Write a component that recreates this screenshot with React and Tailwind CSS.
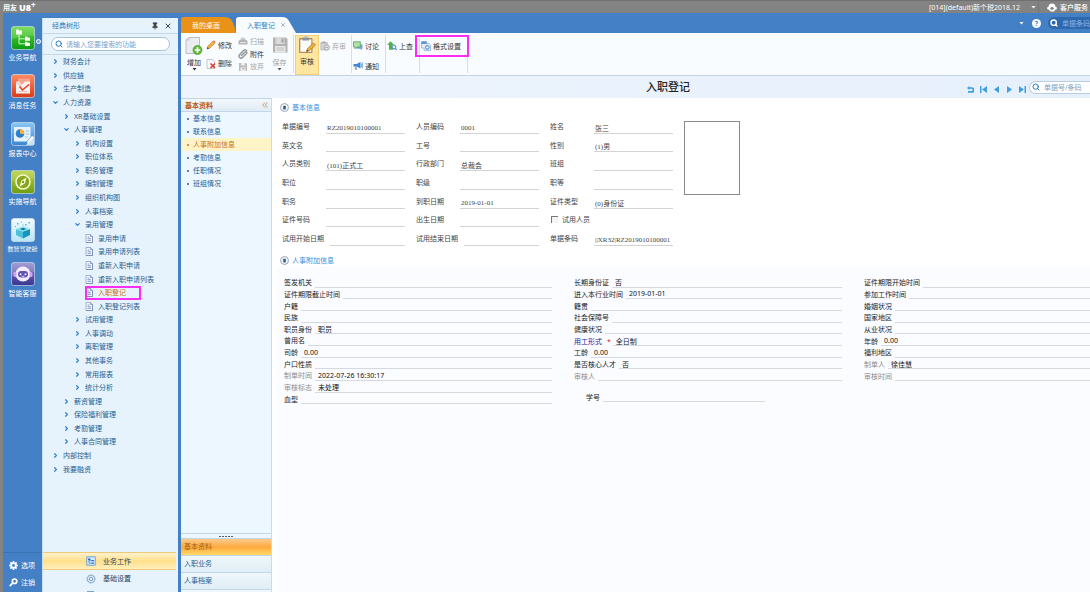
import { useState } from "react";
import { ChevronRight, ChevronDown, Search, Pin, X } from "lucide-react";

const NavTile = ({ id, from, to, children }) => (
    <svg viewBox="0 0 24 24" className="w-6 h-6 shrink-0" aria-hidden="true">
        <defs>
            <linearGradient id={id} x1="0" y1="0" x2="0" y2="1">
                <stop offset="0" stopColor={from} />
                <stop offset="1" stopColor={to} />
            </linearGradient>
        </defs>
        <rect x="0.5" y="0.5" width="23" height="23" rx="2.5" fill={`url(#${id})`} stroke="#dcebf5" strokeOpacity="0.75" strokeWidth="0.8" />
        {children}
    </svg>
);

const navItems = [
    {
        label: "业务导航",
        icon: (
            <NavTile id="n1" from="#5fd836" to="#0c9a14">
                <path d="M1 1h22v9Q12 9 1 13z" fill="#fff" opacity="0.18" />
                <path d="M5 3.5h2.5l.8 1H11v4H5zM14 10.5h2.2l.7.9H19v3.4h-5zM14 15.8h2.2l.7.9H19v3.4h-5z" fill="#f4fff0" />
                <path d="M8 8.5v9.3h6M8 12.8h6" stroke="#e6ffe0" fill="none" strokeWidth="0.9" />
            </NavTile>
        ),
    },
    {
        label: "消息任务",
        icon: (
            <NavTile id="n2" from="#ff8a62" to="#d93a1b">
                <rect x="7" y="4.500" width="12" height="9" fill="#f3a48e" />
                <path d="M5 7.500h3l2.500 3.500L14 7.500h5V19.500H5z" fill="#f8f1ee" />
                <path d="M5 8l5.500 4.500" stroke="#e39b88" fill="none" strokeWidth="0.8" />
                <path d="M8.500 12.500l3 3.500 6.500-5.500" stroke="#e0442a" fill="none" strokeWidth="1.600" />
                <path d="M7.500 17.500h9" stroke="#e9b5a6" fill="none" strokeWidth="0.8" />
            </NavTile>
        ),
    },
    {
        label: "报表中心",
        icon: (
            <NavTile id="n3" from="#8cc7f5" to="#3b86cf">
                <path d="M3 5h16.500v10l-4 4.500H3z" fill="#e6f3fd" />
                <circle cx="9" cy="11.500" r="4.300" fill="#2f80cf" />
                <path d="M9 11.500V7.200a4.300 4.300 0 0 1 4.200 5z" fill="#f7b733" />
                <path d="M14.500 9h3.500M15 12h3M14.500 15h2" stroke="#86b9e2" strokeWidth="0.9" />
                <path d="M23 14.500l-8 8.500h8z" fill="#c8e3f7" />
                <path d="M16 20l5-6 2 1-6 7z" fill="#fff" />
            </NavTile>
        ),
    },
    {
        label: "实施导航",
        icon: (
            <NavTile id="n4" from="#b9d13c" to="#6f9c10">
                <path d="M1 1h22v8Q12 8 1 12z" fill="#fff" opacity="0.15" />
                <circle cx="12" cy="12" r="7" fill="#87a81d" stroke="#f3fad0" strokeWidth="1.5" />
                <path d="M15.500 7.500l-1.700 6-5.300 3.200 1.800-6z" fill="#f7fce0" />
                <circle cx="12" cy="12" r="1.200" fill="#7c9d18" />
            </NavTile>
        ),
    },
    {
        label: "数智驾驶舱",
        compact: true,
        icon: (
            <NavTile id="n5" from="#f5fcff" to="#b8e4f5">
                <path d="M5 11l7 2.500v7L5 17z" fill="#49c3dc" />
                <path d="M19 11l-7 2.500v7l7-3.500z" fill="#1893bd" />
                <path d="M5 11l7-2.500 7 2.500-7 2.500z" fill="#8ce4ec" />
                <path d="M8.500 11l3.500-1.300 3.500 1.300-3.500 1.300z" fill="#1779a5" />
                <path d="M6 5h1.500v1.500H6zM10 3.500h1v1h-1zM14 6h1.500v1.500H14zM17.500 4h1.500v1.500h-1.500zM11.500 6.500h1v1h-1zM4 8h1v1H4z" fill="#45bfd8" />
            </NavTile>
        ),
    },
    {
        label: "智能客服",
        icon: (
            <NavTile id="n6" from="#8a84c9" to="#3a3390">
                <path d="M1 1h22v9Q12 8 1 14z" fill="#fff" opacity="0.2" />
                <circle cx="12" cy="12" r="7.500" fill="#f4edff" />
                <rect x="7" y="9" width="10" height="6.500" rx="3.200" fill="#6552b0" />
                <circle cx="9.500" cy="12.200" r="1" fill="#d9f2ff" />
                <circle cx="14.500" cy="12.200" r="1" fill="#d9f2ff" />
                <rect x="2.500" y="10" width="3" height="5" rx="1.300" fill="#cfa5f2" />
                <rect x="18.500" y="10" width="3" height="5" rx="1.300" fill="#cfa5f2" />
                <path d="M10.500 14q1.500 1 3 0" stroke="#fff" fill="none" strokeWidth="0.7" />
            </NavTile>
        ),
    },
];

const tree = [
    [0, "财务会计"],
    [0, "供应链"],
    [0, "生产制造"],
    [0, "人力资源", true],
    [1, "XR基础设置"],
    [1, "人事管理", true],
    [2, "机构设置"],
    [2, "职位体系"],
    [2, "职务管理"],
    [2, "编制管理"],
    [2, "组织机构图"],
    [2, "人事档案"],
    [2, "录用管理", true],
    [3, "录用申请"],
    [3, "录用申请列表"],
    [3, "重新入职申请"],
    [3, "重新入职申请列表"],
    [3, "入职登记"],
    [3, "入职登记列表"],
    [2, "试用管理"],
    [2, "人事调动"],
    [2, "离职管理"],
    [2, "其他事务"],
    [2, "常用报表"],
    [2, "统计分析"],
    [1, "薪资管理"],
    [1, "保险福利管理"],
    [1, "考勤管理"],
    [1, "人事合同管理"],
    [0, "内部控制"],
    [0, "我要融资"],
];

const indents = ["pl-[9px]", "pl-[20px]", "pl-[31px]", "pl-[42px]"];

const DocIcon = () => (
    <svg viewBox="0 0 8 9" className="w-2 h-[9px] shrink-0 mr-[5px]" aria-hidden="true">
        <path d="M1 .5h4.500l2 2v6H1z" fill="#f8fbff" stroke="#8f9fc4" strokeWidth="0.8" />
        <path d="M5.500.5v2h2v6H1" fill="none" stroke="#6f7fae" strokeWidth="0.7" />
        <path d="M2.500 3h2M2.500 4.700h3.500M2.500 6.400h3.500" stroke="#5f86c4" strokeWidth="0.8" />
    </svg>
);

const TreeRow = ({ level, label, open }) => {
    const selected = label === "入职登记";
    return (
        <li className="flex-1 min-h-0 flex">
            <button type="button" className={`relative flex items-center w-full ${indents[level]} ${selected ? "text-[#c96f14]" : "text-[#265f90]"}`}>
                {level === 3 && <DocIcon />}
                {level < 3 && !open && <ChevronRight className="w-[7px] h-[7px] mr-1 shrink-0 text-[#2b7cc9]" strokeWidth={4} />}
                {level < 3 && open && <ChevronDown className="w-[7px] h-[7px] mr-1 shrink-0 text-[#2b7cc9]" strokeWidth={4} />}
                <span>{label}</span>
                {selected && <span className="absolute left-[42px] top-0 w-14 h-[14px] border-2 border-[#fb2df0]" />}
            </button>
        </li>
    );
};

const Caret = ({ className }) => (
    <svg viewBox="0 0 5 3" className={`w-[5px] h-[3px] shrink-0 ${className}`} aria-hidden="true">
        <path d="M.5 0h4L2.500 2.500z" fill="currentColor" />
    </svg>
);

const smallIcons = {
    pencil: (
        <>
            <path d="M1 9l.8-2.800L7 1l2 2-5.200 5.200z" fill="#f3b13c" stroke="#a8701c" strokeWidth="0.5" />
            <path d="M7 1l2 2 .7-1L8 .3z" fill="#e7766a" />
            <path d="M1 9l.6-2 1.400 1.400z" fill="#333" />
        </>
    ),
    remove: (
        <>
            <path d="M1 .5h5.500l2 2v7H1z" fill="#f7f9fb" stroke="#9aa8b5" strokeWidth="0.6" />
            <path d="M4.500 4.500l4.500 4.500M9 4.500L4.500 9" stroke="#df3528" strokeWidth="1.5" />
        </>
    ),
    scan: (
        <>
            <path d="M3 1l4 1v3H3z" fill="#d0d0d0" />
            <path d="M.5 5l2-1.500h5L9.500 5v3.500h-9z" fill="#b3b3b3" />
            <path d="M2 6.500h6" stroke="#e8e8e8" />
        </>
    ),
    clip: <path d="M3 7l4-4a1 1 0 0 1 1.500 1.500L4.500 8.500a1.900 1.900 0 0 1-3-2.800l4-4.200A2.300 2.300 0 0 1 9 2" fill="none" stroke="#8f9396" strokeWidth="1.3" />,
    discard: (
        <>
            <path d="M1 1h7l1 1v7H1z" fill="#bcbcbc" />
            <path d="M3 1h4v2.500H3zM2.500 5.500h5V9h-5z" fill="#ededed" />
            <path d="M4 6.800h2.500" stroke="#999" strokeWidth="0.8" />
        </>
    ),
    unaudit: (
        <>
            <path d="M.8 1.500h6.500v7.500H.8z" fill="#d4d4d4" stroke="#aaa" strokeWidth="0.6" />
            <path d="M2.500.5h3v2h-3z" fill="#aaa" />
            <circle cx="6.800" cy="6.500" r="2.600" fill="#e4e4e4" stroke="#a4a4a4" strokeWidth="0.9" />
            <path d="M5.500 6.500h2.700" stroke="#999" strokeWidth="0.8" />
        </>
    ),
    chat: (
        <>
            <path d="M3.500 3.500h6v4.300H8.600v1.500L7 7.800H3.500z" fill="#74a8dc" />
            <path d="M.5.8h6.800v5.200H3.600L2 7.700V6H.5z" fill="#b5e0ae" stroke="#53a052" strokeWidth="0.8" />
        </>
    ),
    notice: (
        <>
            <path d="M.5 3h3l4-2v6.500l-4-2h-3z" fill="#3f87cf" />
            <path d="M1.500 5.500h2l.7 3.500H2.300z" fill="#9aa8b5" />
            <path d="M8.500 2.500v4M9.600 1.500v6" stroke="#4b91d4" strokeWidth="0.7" />
        </>
    ),
    lookup: (
        <>
            <path d="M3.500.2L7 4H5v2.200h1.500v2.500H2V4H.2z" fill="#54b04b" />
            <circle cx="7" cy="6" r="1.900" fill="#e5f2fb" stroke="#3a7fc2" strokeWidth="0.9" />
            <path d="M8.300 7.400L9.700 9" stroke="#3a7fc2" strokeWidth="1.100" />
        </>
    ),
    format: (
        <>
            <path d="M.5.5h5v2h2.500l1.500 1.500V9.500H3V7H.5z" fill="#e4effa" stroke="#85aede" strokeWidth="0.7" />
            <path d="M.5.5h5v2.500h-5z" fill="#5b96d6" />
            <circle cx="6.300" cy="6.400" r="1.900" fill="#c3d8ef" stroke="#4b80bb" strokeWidth="0.9" />
            <circle cx="6.300" cy="6.400" r=".7" fill="#fff" />
        </>
    ),
};

const ToolButton = ({ icon, label, muted, className = "h-5" }) => (
    <button type="button" className={`flex items-center gap-[2px] ${className} ${muted ? "text-[#a8a8a8]" : "text-[#333]"}`}>
        <svg viewBox="0 0 10 10" className="w-[10px] h-[10px] shrink-0" aria-hidden="true">
            {smallIcons[icon]}
        </svg>
        <span>{label}</span>
    </button>
);

const AddIcon = () => (
    <svg viewBox="0 0 18 18" className="w-[18px] h-[18px]" aria-hidden="true">
        <path d="M1 3L4 .5h10.500V16.500H1z" fill="#e9edf0" stroke="#a9b1b8" strokeWidth="0.8" />
        <path d="M1 3.500h3.500V.5z" fill="#c6ccd2" />
        <circle cx="12.500" cy="13" r="4.500" fill="#67b83b" stroke="#3f8d22" strokeWidth="0.6" />
        <path d="M12.500 10.300v5.400M9.800 13h5.400" stroke="#fff" strokeWidth="1.7" />
    </svg>
);

const SaveIcon = () => (
    <svg viewBox="0 0 18 18" className="w-[18px] h-[18px]" aria-hidden="true">
        <path d="M2 1.500h13l1.500 1.500v13.500H2z" fill="#b2b2b2" />
        <path d="M4.500 1.500h9V8h-9z" fill="#dadada" />
        <path d="M10.500 2.500h2v4h-2z" fill="#a0a0a0" />
        <path d="M4 10h10.500v6.500H4z" fill="#e6e6e6" />
        <path d="M5.500 12h7.500M5.500 14h7.500" stroke="#b8b8b8" strokeWidth="0.8" />
    </svg>
);

const AuditIcon = () => (
    <svg viewBox="0 0 18 18" className="w-[18px] h-[18px]" aria-hidden="true">
        <rect x="1" y="2" width="13.500" height="15" rx="1" fill="#b98a55" />
        <rect x="2.300" y="3.500" width="11" height="12.300" fill="#fbfbf8" />
        <path d="M4.500 1.500h6.500v3H4.500z" fill="#8b96a1" />
        <path d="M6.500 0h2.500v2H6.500z" fill="#b6bec5" />
        <path d="M8.500 15.500l1-3 6-5.500 2 2-6 5.500z" fill="#f2b036" stroke="#96641c" strokeWidth="0.6" />
        <path d="M8.500 15.500l.6-1.800 1.200 1.200z" fill="#222" />
    </svg>
);

const Toolbar = () => (
    <div className="flex h-[43px] shrink-0 bg-[#f9fcff] border-b border-[#c5d3e2] text-[#333]">
        <div className="flex my-[2px] pl-px border-r border-[#d5dfe9] w-[113px] shrink-0">
            <button type="button" className="flex flex-col items-center w-6 pt-[2px]">
                <AddIcon />
                <span className="mt-[3px]">增加</span>
                <Caret className="mt-px" />
            </button>
            <div className="flex flex-col w-8 pt-px">
                <ToolButton icon="pencil" label="修改" />
                <ToolButton icon="remove" label="删除" />
            </div>
            <div className="flex flex-col w-7">
                <ToolButton icon="scan" label="扫描" muted className="h-[13px]" />
                <ToolButton icon="clip" label="附件" className="h-[13px]" />
                <ToolButton icon="discard" label="放弃" muted className="h-[13px]" />
            </div>
            <button type="button" className="flex flex-col items-center w-[27px] pt-px text-[#a0a0a0]">
                <SaveIcon />
                <span className="mt-1">保存</span>
                <Caret className="mt-px text-[#555]" />
            </button>
        </div>
        <div className="flex my-[2px] w-[58px] shrink-0 border-r border-[#d5dfe9]">
            <button type="button" className="flex flex-col items-center w-6 ml-px mr-px h-10 shrink-0 bg-[#fde6a0] border border-[#f3cf7a]">
                <AuditIcon />
                <span className="mt-[3px]">审核</span>
            </button>
            <ToolButton icon="unaudit" label="弃审" muted className="h-[22px]" />
        </div>
        <div className="my-[2px] w-[34px] pl-px pt-px shrink-0 border-r border-[#d5dfe9]">
            <ToolButton icon="chat" label="讨论" />
            <ToolButton icon="notice" label="通知" />
        </div>
        <div className="my-[2px] w-[34px] pl-px pt-px shrink-0 border-r border-[#d5dfe9]">
            <ToolButton icon="lookup" label="上查" />
        </div>
        <div className="relative my-[2px] w-12 pl-px pt-px shrink-0 border-r border-[#d5dfe9]">
            <ToolButton icon="format" label="格式设置" />
            <span className="absolute -left-[5px] top-0 w-[54px] h-[22px] border-2 border-[#fb2df0]" />
        </div>
    </div>
);

const Tabs = () => (
    <div className="flex items-end h-5 shrink-0 bg-[#4480c6]">
        <button type="button" className="relative w-[55px] h-4 pl-[11px] text-left text-white">
            <svg viewBox="0 0 55 16" preserveAspectRatio="none" className="absolute inset-0 w-full h-full" aria-hidden="true">
                <path d="M0 16V3Q0 0 3 0H43Q49 0 51 4Q54 9 55 16z" fill="#ea9118" />
            </svg>
            <span className="relative">我的桌面</span>
        </button>
        <div className="relative w-[60px] h-4 flex items-center pl-[11px] text-[#2f7cc4]">
            <svg viewBox="0 0 60 16" preserveAspectRatio="none" className="absolute inset-0 w-full h-full" aria-hidden="true">
                <path d="M0 16V3Q0 0 3 0H46Q51 0 53 4L60 16z" fill="#f9fcff" />
            </svg>
            <button type="button" className="relative">入职登记</button>
            <button type="button" aria-label="关闭" className="relative ml-[5px]">
                <X className="w-[6px] h-[6px] text-[#8796a5]" strokeWidth={3} />
            </button>
        </div>
        <div className="ml-auto self-center flex items-center text-white">
            <Caret className="mr-[8px]" />
            <button type="button" aria-label="帮助" className="w-[9px] h-[9px] mr-[7px] rounded-full bg-white text-[#4480c6] font-bold">?</button>
            <label className="flex items-center w-[42px] h-3 pl-[2px] rounded-l-full bg-[#2f68ac]">
                <Search className="w-2 h-2 mr-1 shrink-0" strokeWidth={4} />
                <input aria-label="单据条码" placeholder="单据条码" className="w-full min-w-0 bg-transparent outline-none placeholder:text-[#86b3e4]" />
            </label>
        </div>
    </div>
);

const pagers = [
    ["刷新", "M2.500 0L0 2l2.500 2V2.800h2a1 1 0 0 1 0 2.200H1v1.800h3.800a2.700 2.700 0 0 0 0-5.500H2.500z"],
    ["首张", "M0 0h1.500v7H0zM7 0v7L2 3.500z"],
    ["上张", "M6 0v7L1 3.500z"],
    ["下张", "M1 0v7l5-3.500z"],
    ["末张", "M0 0v7l5-3.500zM5.500 0H7v7H5.500z"],
];

const TitleBar = () => (
    <div className="flex items-center h-[22px] shrink-0 bg-gradient-to-r from-[#eef4fd] to-[#e6f0fc]">
        <h1 className="ml-auto mr-[277px] text-[11px] leading-3 font-medium text-[#222]">入职登记</h1>
        <div className="flex items-center gap-[6px] mt-1 mr-[3px]">
            {pagers.map(([label, d]) => (
                <button key={label} type="button" aria-label={label}>
                    <svg viewBox="0 0 7 7" className="w-[7px] h-[7px]" aria-hidden="true">
                        <path d={d} fill="#3f9fe2" />
                    </svg>
                </button>
            ))}
        </div>
        <label className="flex items-center w-[61px] h-[13px] pl-[2px] rounded-l-full bg-white border border-r-0 border-[#b9cde2]">
            <Search className="w-2 h-2 mr-1 shrink-0 text-[#2878c0]" strokeWidth={3} />
            <input aria-label="单据号/条码" placeholder="单据号/条码" className="w-full min-w-0 outline-none placeholder:text-[#7f9fc0]" />
        </label>
    </div>
);

const sections = ["基本信息", "联系信息", "人事附加信息", "考勤信息", "任职情况", "班组情况"];
const drawers = ["基本资料", "入职业务", "人事档案"];

const SectionList = () => (
    <aside className="flex flex-col w-[91px] shrink-0 bg-[#edf7ff] border-r border-[#c9dcec] text-[#1f5c93]">
        <div className="flex items-center justify-between h-[14px] shrink-0 pl-1 pr-[3px] border-y border-[#c3d6e8] bg-gradient-to-b from-[#f3f8fc] to-[#dfebf5]">
            <span className="font-bold text-[#bb5a10]">基本资料</span>
            <svg viewBox="0 0 6 6" className="w-[6px] h-[6px]" aria-hidden="true">
                <path d="M3 .5L.8 3 3 5.500M5.500.5L3.300 3l2.200 2.500" fill="none" stroke="#c48a58" strokeWidth="0.8" />
            </svg>
        </div>
        <ul className="flex-1 min-h-0 overflow-hidden">
            {sections.map((s) => (
                <li key={s}>
                    <button type="button" className={`flex items-center w-full h-[13px] pl-[6px] ${s === "人事附加信息" ? "bg-[#fff4c8] text-[#c96f14]" : ""}`}>
                        <span className="w-[2px] h-[2px] mr-1 rounded-full bg-current" />
                        {s}
                    </button>
                </li>
            ))}
        </ul>
        <div className="flex items-center justify-center gap-px h-[5px] shrink-0 border-t border-[#c3d6e8]">
            {[0, 1, 2, 3, 4].map((i) => (
                <span key={i} className="w-[2px] h-px bg-[#55606c]" />
            ))}
        </div>
        <div className="h-[54px] shrink-0 overflow-hidden">
            {drawers.map((d, i) => (
                <button
                    key={d}
                    type="button"
                    className={`block w-full h-[17px] pl-[3px] pb-px text-left border-t border-[#c3d6e8] ${
                        i === 0 ? "bg-linear-to-b from-[#fdcb8a] via-[#fda93c] to-[#ffd968] text-[#a4600e]" : "bg-linear-to-b from-[#eff7fb] to-[#e0eef5]"
                    }`}
                >
                    {d}
                </button>
            ))}
            <div className="h-[3px] border-t border-[#c3d6e8]" />
        </div>
    </aside>
);

const basicFields = [
    ["单据编号", "RZ2019010100001"],
    ["人员编码", "0001"],
    ["姓名", "张三"],
    ["英文名", ""],
    ["工号", ""],
    ["性别", "(1)男"],
    ["人员类别", "(101)正式工"],
    ["行政部门", "总裁会"],
    ["班组", ""],
    ["职位", ""],
    ["职级", ""],
    ["职等", ""],
    ["职务", ""],
    ["到职日期", "2019-01-01"],
    ["证件类型", "(0)身份证"],
    ["证件号码", ""],
    ["出生日期", ""],
    ["试用人员", "check"],
    ["试用开始日期", ""],
    ["试用结束日期", ""],
    ["单据条码", "||XR32|RZ2019010100001"],
];

const BasicField = ({ label, value }) => {
    if (value === "check") {
        return (
            <label className="flex items-center gap-1 pl-px">
                <input type="checkbox" className="appearance-none w-[7px] h-[7px] bg-[#f4f4f4] border-t border-l border-t-[#777] border-l-[#777]" />
                {label}
            </label>
        );
    }
    return (
        <label className="flex items-center">
            <span className="min-w-11 shrink-0 pr-[6px]">{label}</span>
            <input
                defaultValue={value}
                className="w-full min-w-0 h-[11px] pl-px self-end mb-[2px] bg-transparent border-b border-[#d3d3d3] outline-none font-['Liberation_Serif','Noto_Sans_CJK_SC',serif] text-[#444]"
            />
        </label>
    );
};

const extraFields = [
    [
        ["签发机关"],
        ["证件期限截止时间"],
        ["户籍"],
        ["民族"],
        ["职员身份", "职员"],
        ["曾用名"],
        ["司龄", "0.00"],
        ["户口性质"],
        ["制单时间", "2022-07-26 16:30:17", "muted"],
        ["审核标志", "未处理", "muted"],
        ["血型"],
    ],
    [
        ["长期身份证", "否"],
        ["进入本行业时间", "2019-01-01"],
        ["籍贯"],
        ["社会保障号"],
        ["健康状况"],
        ["用工形式", "全日制", "required"],
        ["工龄", "0.00"],
        ["是否核心人才", "否"],
        ["审核人", "", "muted"],
    ],
    [
        ["证件期限开始时间"],
        ["参加工作时间"],
        ["婚姻状况"],
        ["国家地区"],
        ["从业状况"],
        ["年龄", "0.00"],
        ["福利地区"],
        ["制单人", "徐佳慧", "muted"],
        ["审核时间", "", "muted"],
    ],
];

const tones = { muted: "text-[#8c8c8c]", required: "text-[#1a1a9c]" };

const ExtraField = ({ label, value, tone }) => (
    <label className="flex items-center">
        <span className={`shrink-0 mr-[3px] ${tones[tone] || "text-[#222]"}`}>{label}</span>
        {tone === "required" && <span className="mx-[2px] text-[#f01414]">*</span>}
        <input defaultValue={value} className="w-full min-w-0 h-[10px] pl-[3px] bg-transparent border-b border-[#d5dae2] outline-none text-[#111]" />
    </label>
);

const SectionHeading = ({ children }) => (
    <h2 className="flex items-center gap-[3px] h-3 text-[#3490e0]">
        <svg viewBox="0 0 9 9" className="w-[9px] h-[9px]" aria-hidden="true">
            <circle cx="4.500" cy="4.500" r="4" fill="#eef3f8" stroke="#8b98a5" strokeWidth="0.8" />
            <path d="M3.200 2.800h2.600v3.600H3.200z" fill="#275f9f" />
        </svg>
        {children}
    </h2>
);

const Form = () => (
    <main className="flex-1 min-w-0 flex flex-col bg-white text-[#444]">
        <div className="pl-2 pt-[3px]">
            <SectionHeading>基本信息</SectionHeading>
        </div>
        <div className="flex items-start pl-[10px] pt-1">
            <div className="grid grid-cols-[123px_123px_123px] grid-rows-7 gap-x-[11px] h-[131px] shrink-0">
                {basicFields.map(([label, value]) => (
                    <BasicField key={label} label={label} value={value} />
                ))}
            </div>
            <div className="w-14 h-[74px] mt-1 ml-[11px] shrink-0 border border-[#8a8a8a]" />
        </div>
        <div className="pl-2 pt-[6px]">
            <SectionHeading>人事附加信息</SectionHeading>
        </div>
        <div className="flex-1 ml-1 pl-2 pt-[11px] bg-[#fbfcff]">
            <div className="grid grid-cols-[268fr_268fr_226fr] gap-x-[22px]">
                {extraFields.map((col, i) => (
                    <div key={i}>
                        <div className={`grid ${i === 0 ? "h-32 grid-rows-11" : "h-[105px] grid-rows-9"}`}>
                            {col.map(([label, value, tone]) => (
                                <ExtraField key={label} label={label} value={value} tone={tone} />
                            ))}
                        </div>
                        {i === 1 && (
                            <div className="w-[191px] mt-[10px] pl-3">
                                <ExtraField label="学号" />
                            </div>
                        )}
                    </div>
                ))}
            </div>
        </div>
    </main>
);

const SystemIcon = ({ gear }) => (
    <svg viewBox="0 0 10 10" className="w-[10px] h-[10px] mr-[7px]" aria-hidden="true">
        {gear ? (
            <>
                <circle cx="5" cy="5" r="3.900" fill="#d9e7f4" stroke="#5f88b3" strokeWidth="1" strokeDasharray="1.5 .5" />
                <circle cx="5" cy="5" r="1.600" fill="#fff" stroke="#5f88b3" strokeWidth="0.8" />
            </>
        ) : (
            <>
                <rect x=".8" y=".8" width="8.400" height="8.400" fill="#d7eaff" stroke="#5c93cc" strokeWidth="0.8" />
                <path d="M2 2.500h2.500v1.500H2zM5.500 4h2.500v1.300H5.500zM5.500 6.500h2.500v1.300H5.500z" fill="#2672bd" />
                <path d="M3 4v3.200h2.500M3 4.700h2.500" stroke="#2672bd" fill="none" strokeWidth="0.7" />
            </>
        )}
    </svg>
);

const App = () => {
    const [keyword, setKeyword] = useState("");

    return (
        <div className="flex flex-col h-screen overflow-hidden bg-[#838383] text-[7px] leading-[9px] font-['Noto_Sans','Noto_Sans_CJK_SC',sans-serif]">
            <header className="flex items-center h-[13px] shrink-0 pl-[3px] pt-px border-t border-[#707070] text-white">
                <span className="font-bold">用友</span>
                <span className="ml-[2px] text-[9px] font-black">U8</span>
                <span className="text-[8px] leading-[5px] self-start font-bold">+</span>
                <span className="ml-auto">[014](default)新个税2018.12</span>
                <Caret className="ml-[11px] mr-[2px]" />
                <span className="w-px h-3 bg-[#757575]" />
                <button type="button" className="flex items-center ml-[8px] gap-[3px] font-medium">
                    <svg viewBox="0 0 10 9" className="w-[10px] h-[9px]" aria-hidden="true">
                        <path d="M1.500 4a3.500 3.500 0 0 1 7 0l1.300.2v2L8.500 6.500 7 8.500H4L1.500 6.500.2 6V4.200z" fill="#fff" />
                        <path d="M3 5.200Q5 3 7 5.200L6 6.800H4z" fill="#838383" />
                    </svg>
                    客户服务
                </button>
                <span className="w-[2px]" />
            </header>

            <div className="flex flex-1 min-h-0 ml-[3px] bg-[#4480c6]">
                <nav className="flex flex-col items-center w-[39px] shrink-0 pt-[13px] text-white">
                    {navItems.map(({ label, compact, icon }, i) => (
                        <button key={label} type="button" className={`relative flex flex-col items-center shrink-0 w-full ${compact ? "h-11 text-[6px]" : "h-12"}`}>
                            {icon}
                            <span className="mt-[3px]">{label}</span>
                            {i === 0 && <span className="absolute right-[1px] top-[13px] w-[5px] h-[5px] rounded-full border border-white bg-[#6ea1d6]" />}
                        </button>
                    ))}
                    <div className="mt-auto w-full pt-1 pl-[6px] border-t border-[#3a72b2]">
                        <button type="button" className="flex items-center h-[17px] gap-[3px]">
                            <svg viewBox="0 0 10 10" className="w-[9px] h-[9px]" aria-hidden="true">
                                <circle cx="5" cy="5" r="2.600" fill="none" stroke="#fff" strokeWidth="2" />
                                <path d="M5 0v2M5 8v2M0 5h2M8 5h2M1.500 1.500l1.400 1.400M7.100 7.100l1.400 1.400M1.500 8.500l1.400-1.400M7.100 2.900l1.400-1.400" stroke="#fff" strokeWidth="1.800" />
                            </svg>
                            选项
                        </button>
                        <button type="button" className="flex items-center h-[17px] gap-[3px]">
                            <svg viewBox="0 0 10 10" className="w-[9px] h-[9px]" aria-hidden="true">
                                <circle cx="6.200" cy="3.600" r="2.500" fill="none" stroke="#fff" strokeWidth="1.900" />
                                <path d="M4.300 5.500L.8 9" stroke="#fff" strokeWidth="1.900" />
                            </svg>
                            注销
                        </button>
                        <div className="h-px" />
                    </div>
                </nav>

                <div className="flex flex-col w-[136px] mt-[5px] shrink-0 bg-[#e6f2fc] border-l border-[#c8dff3]">
                    <div className="flex items-center h-4 shrink-0 pl-[9px] pr-[6px] border-b border-[#c5d8e8] text-[#2f78bb]">
                        <span className="mr-auto">经典树形</span>
                        <button type="button" aria-label="固定" className="mr-[5px]">
                            <Pin className="w-2 h-2 text-[#444]" strokeWidth={2} fill="currentColor" />
                        </button>
                        <button type="button" aria-label="关闭">
                            <X className="w-2 h-2 text-[#444]" strokeWidth={3} />
                        </button>
                    </div>
                    <div className="flex items-center h-[21px] shrink-0 px-[8px] border-b border-[#c5d8e8]">
                        <label className="flex items-center w-[119px] h-[14px] pl-[3px] rounded-full bg-white border border-[#a9c3db]">
                            <Search className="w-2 h-2 mr-[3px] shrink-0 text-[#2878c0]" strokeWidth={3} />
                            <input
                                aria-label="搜索功能"
                                value={keyword}
                                onChange={(e) => setKeyword(e.target.value)}
                                placeholder="请输入您要搜索的功能"
                                className="w-full min-w-0 bg-transparent outline-none placeholder:text-[#7ba3ca]"
                            />
                        </label>
                    </div>
                    <div className="flex-1 min-h-0 overflow-hidden">
                        <ul className="flex flex-col h-[421px]">
                            {tree.map(([level, label, open]) => (
                                <TreeRow key={label} level={level} label={label} open={open} />
                            ))}
                        </ul>
                    </div>
                    <div className="h-10 shrink-0 mr-[2px] overflow-hidden text-[#1f3f66]">
                        <button type="button" className="flex items-center w-full h-[18px] pl-[43px] border-y border-[#f0c878] bg-linear-to-b from-[#fff3cd] via-[#ffdf88] to-[#fff0bd]">
                            <SystemIcon />
                            业务工作
                        </button>
                        <button type="button" className="flex items-center w-full h-[17px] pl-[43px]">
                            <SystemIcon gear />
                            基础设置
                        </button>
                        <span className="block w-[7px] h-[2px] mt-1 ml-[44px] bg-[#7aa3cc]" />
                    </div>
                </div>

                <div className="flex flex-col flex-1 min-w-0 ml-[3px]">
                    <Tabs />
                    <Toolbar />
                    <TitleBar />
                    <div className="flex flex-1 min-h-0">
                        <SectionList />
                        <Form />
                    </div>
                </div>
            </div>
        </div>
    );
};

export default App;
